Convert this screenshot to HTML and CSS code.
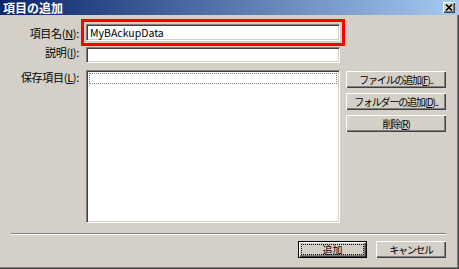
FILE: index.html
```html
<!DOCTYPE html>
<html lang="ja">
<head>
    <meta charset="UTF-8">
    <title>項目の追加</title>
    <link rel="stylesheet" href="styles.css">
</head>
<body>
    <div class="window">
        <div class="titlebar">
            <span class="title">項目の追加</span>
            <button class="close-btn" aria-label="閉じる">
                <svg width="8" height="7" viewBox="0 0 8 7">
                    <path d="M1 0.5 L7 6.5 M7 0.5 L1 6.5" stroke="#000" stroke-width="1.6" fill="none"/>
                </svg>
            </button>
        </div>

        <div class="form">
            <label class="label">項目名(<u>N</u>):</label>
            <input class="text-input highlight" type="text" value="MyBAckupData">
            <div></div>

            <label class="label">説明(<u>I</u>):</label>
            <input class="text-input desc" type="text" value="">
            <div></div>

            <label class="label list-label">保存項目(<u>L</u>):</label>
            <div class="list">
                <div class="focus-row"></div>
            </div>
            <div class="side-buttons">
                <button class="btn">ファイルの追加(<u>F</u>)..</button>
                <button class="btn">フォルダーの追加(<u>D</u>)..</button>
                <button class="btn">削除(<u>R</u>)</button>
            </div>
        </div>

        <div class="separator"></div>

        <div class="footer">
            <button class="btn btn-default">追加</button>
            <button class="btn btn-cancel">キャンセル</button>
        </div>
    </div>
</body>
</html>
```

FILE: styles.css
```css
* {
    box-sizing: border-box;
    margin: 0;
    padding: 0;
}

body {
    background: #d4d0c8;
    font-family: "Noto Sans CJK JP", "Noto Sans", sans-serif;
    font-size: 11px;
    color: #000;
}

.window {
    width: 459px;
    height: 269px;
    background: #d4d0c8;
    box-shadow: inset -1px -1px #404040, inset -2px -2px #808080;
    overflow: hidden;
}

.titlebar {
    height: 15px;
    display: flex;
    justify-content: space-between;
    align-items: center;
    padding: 0 4px 0 3px;
    background: linear-gradient(to right, #0a246a, #a6caf0);
}

.title {
    color: #fff;
    font-weight: bold;
    font-size: 12px;
    line-height: 15px;
}

.close-btn {
    width: 12px;
    height: 11px;
    display: flex;
    align-items: center;
    justify-content: center;
    border: none;
    background: #d4d0c8;
    box-shadow: inset 1px 1px #fff, inset -1px -1px #404040, inset -2px -2px #808080;
}

.form {
    display: grid;
    grid-template-columns: 75px 254px 106px;
    padding: 9px 0 0 11px;
    align-items: center;
}

.label {
    text-align: right;
    padding-right: 7px;
    white-space: nowrap;
    line-height: 14px;
    letter-spacing: -0.3px;
}

.text-input {
    width: 254px;
    height: 17px;
    border: 1px solid;
    border-color: #808080 #fff #fff #808080;
    box-shadow: inset 1px 1px #404040, inset -1px -1px #d4d0c8;
    background: #fff;
    font-family: inherit;
    font-size: 10.5px;
    padding: 0 3px;
    outline: none;
}

.highlight {
    outline: 3px solid #f00;
    outline-offset: 2px;
}

.desc {
    height: 16px;
    margin-top: 6px;
}

.list-label {
    align-self: start;
    margin-top: 7px;
}

.list {
    height: 153px;
    margin-top: 7px;
    align-self: start;
    border: 1px solid;
    border-color: #808080 #fff #fff #808080;
    box-shadow: inset 1px 1px #404040, inset -1px -1px #d4d0c8;
    background: #fff;
    padding: 2px;
}

.focus-row {
    height: 11px;
    border: 1px dotted #808080;
}

.side-buttons {
    align-self: start;
    margin: 8px 0 0 6px;
    display: flex;
    flex-direction: column;
    gap: 5px;
}

.btn {
    height: 17px;
    border: none;
    background: #d4d0c8;
    box-shadow: inset 1px 1px #fff, inset -1px -1px #404040, inset -2px -2px #808080;
    font-family: inherit;
    font-size: 10px;
    color: #000;
    line-height: 15px;
    white-space: nowrap;
}

.side-buttons .btn {
    width: 100px;
    letter-spacing: -1.2px;
}

.separator {
    margin: 10px 0 0 11px;
    width: 435px;
    height: 2px;
    border-top: 1px solid #808080;
    border-bottom: 1px solid #fff;
}

.footer {
    width: 446px;
    display: flex;
    justify-content: flex-end;
    gap: 9px;
    margin-top: 6px;
}

.btn-default {
    width: 69px;
    border: 1px solid #000;
    outline: 1px dotted #000;
    outline-offset: -4px;
}

.btn-cancel {
    width: 70px;
    letter-spacing: -1.3px;
}
```
